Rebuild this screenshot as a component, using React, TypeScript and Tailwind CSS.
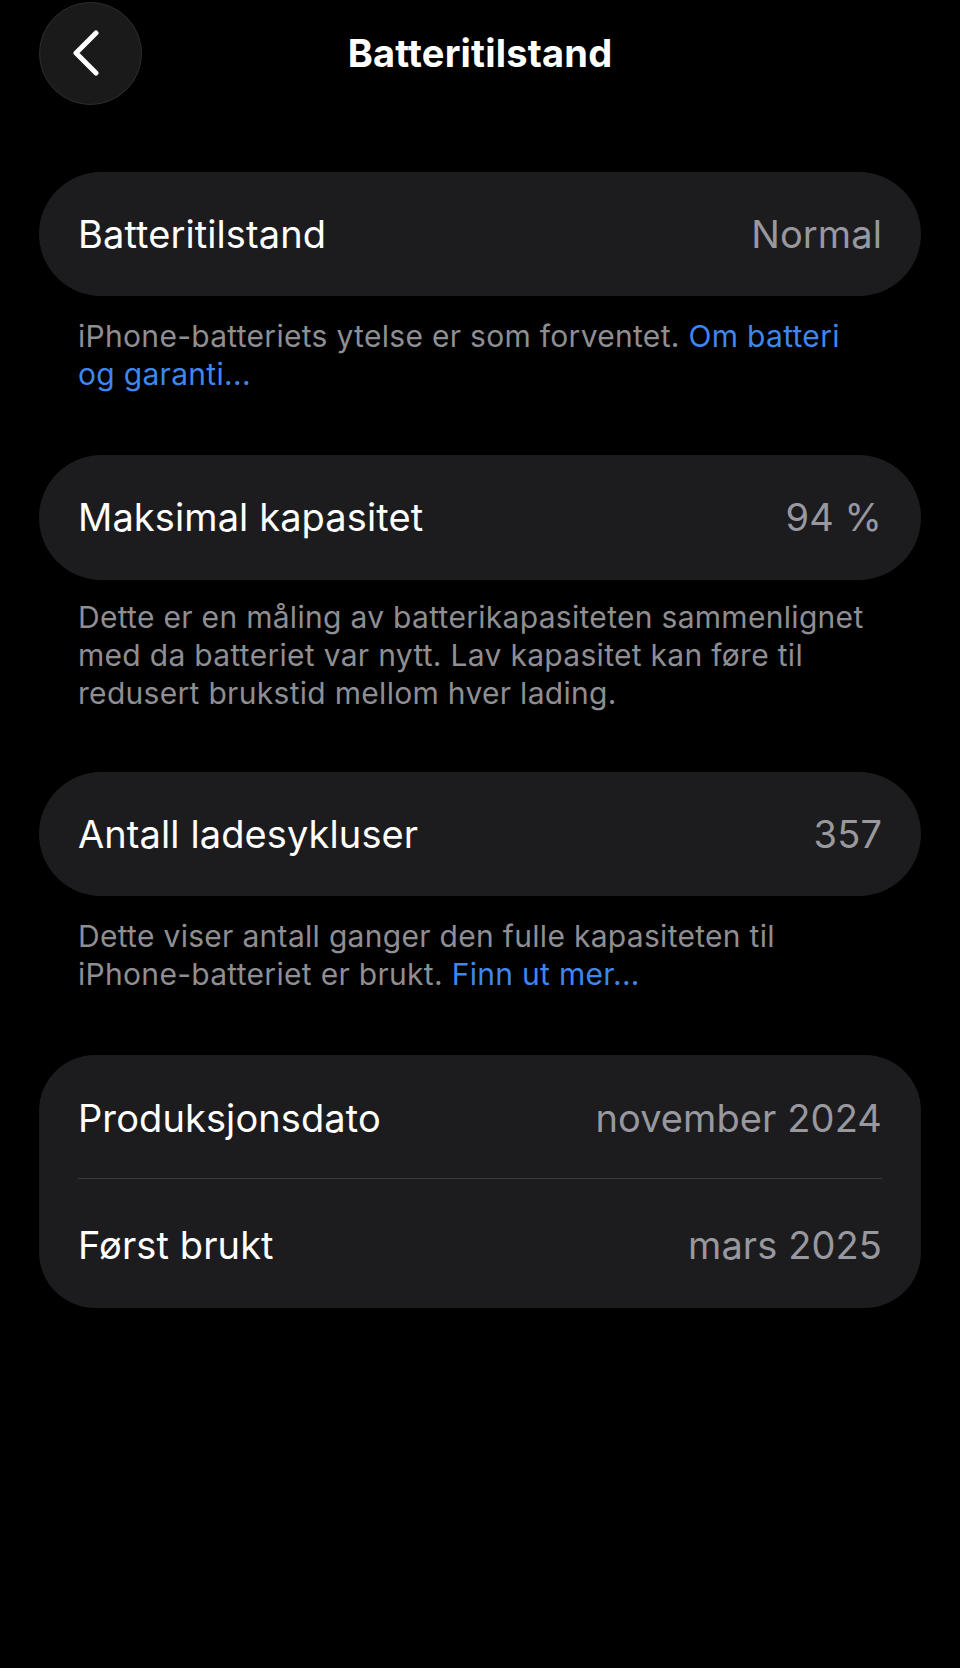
import React from "react";

const Row = ({ label, value }: { label: string; value: string }) => (
  <div className="flex items-center justify-between">
    <span className="text-white">{label}</span>
    <span className="text-[#98989e]">{value}</span>
  </div>
);

const App = () => {
  return (
    <div className="min-h-[1668px] w-full bg-black font-['Inter','Liberation_Sans',sans-serif] text-[38px] tracking-[0.1px]">
      <header className="grid h-[106px] grid-cols-[1fr_auto_1fr] items-center px-[39px]">
        <button className="flex h-[103px] w-[103px] items-center justify-center rounded-full border border-[#2e2e30] bg-[#1a1a1b]">
          <svg width="30" height="46" viewBox="0 0 30 46" fill="none" className="mr-[10px]">
            <path d="M25 3 L5 23 L25 43" stroke="white" strokeWidth="5" strokeLinecap="round" strokeLinejoin="round" />
          </svg>
        </button>
        <h1 className="font-bold tracking-[0.2px] text-white">Batteritilstand</h1>
        <div />
      </header>

      <main className="px-[39px] pt-[66px]">
        <div className="flex h-[124px] items-center rounded-full bg-[#1c1c1e] px-[39px]">
          <div className="flex-1">
            <Row label="Batteritilstand" value="Normal" />
          </div>
        </div>
        <p className="mt-[21px] px-[39px] text-[30px] leading-[38px] tracking-[0.3px] text-[#8e8e93]">
          iPhone-batteriets ytelse er som forventet. <span className="text-[#3e87ee]">Om batteri</span>
          <br />
          <span className="text-[#3e87ee]">og garanti...</span>
        </p>

        <div className="mt-[62px] flex h-[125px] items-center rounded-full bg-[#1c1c1e] px-[39px]">
          <div className="flex-1">
            <Row label="Maksimal kapasitet" value="94 %" />
          </div>
        </div>
        <p className="mt-[18px] px-[39px] text-[30px] leading-[38px] tracking-[0.3px] text-[#8e8e93]">
          Dette er en måling av batterikapasiteten sammenlignet
          <br />
          med da batteriet var nytt. Lav kapasitet kan føre til
          <br />
          redusert brukstid mellom hver lading.
        </p>

        <div className="mt-[60px] flex h-[124px] items-center rounded-full bg-[#1c1c1e] px-[39px]">
          <div className="flex-1">
            <Row label="Antall ladesykluser" value="357" />
          </div>
        </div>
        <p className="mt-[21px] px-[39px] text-[30px] leading-[38px] tracking-[0.3px] text-[#8e8e93]">
          Dette viser antall ganger den fulle kapasiteten til
          <br />
          iPhone-batteriet er brukt. <span className="text-[#3e87ee]">Finn ut mer...</span>
        </p>

        <div className="mt-[62px] rounded-[56px] bg-[#1c1c1e] px-[39px]">
          <div className="flex h-[123px] items-center pt-[4px]">
            <div className="flex-1">
              <Row label="Produksjonsdato" value="november 2024" />
            </div>
          </div>
          <div className="h-px bg-[#3a3a3c]" />
          <div className="flex h-[129px] items-center pt-[4px]">
            <div className="flex-1">
              <Row label="Først brukt" value="mars 2025" />
            </div>
          </div>
        </div>
      </main>
    </div>
  );
};

export default App;
